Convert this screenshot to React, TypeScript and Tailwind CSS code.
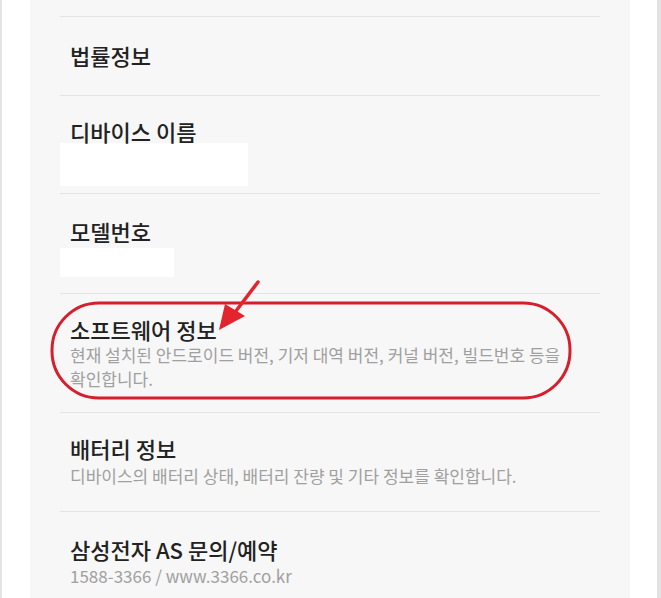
const font = { fontFamily: '"Noto Sans CJK KR", "Noto Sans", sans-serif' };

type Row = {
  title: string;
  sub?: string[];
  redact?: { w: string; h: string; mt: string };
  pad: string;
  subMt?: string;
};

const rows: Row[] = [
  { title: "법률정보", pad: "pt-[25px] pb-[27px]" },
  {
    title: "디바이스 이름",
    redact: { w: "w-[188px]", h: "h-[43px]", mt: "mt-[-1px]" },
    pad: "pt-[22px] pb-[7px]",
  },
  {
    title: "모델번호",
    redact: { w: "w-[114px]", h: "h-[29px]", mt: "mt-[4px]" },
    pad: "pt-[24px] pb-[16px]",
  },
  {
    title: "소프트웨어 정보",
    sub: [
      "현재 설치된 안드로이드 버전, 기저 대역 버전, 커널 버전, 빌드번호 등을",
      "확인합니다.",
    ],
    pad: "pt-[22px] pb-[21px]",
    subMt: "mt-[1px]",
  },
  {
    title: "배터리 정보",
    sub: ["디바이스의 배터리 상태, 배터리 잔량 및 기타 정보를 확인합니다."],
    pad: "pt-[22px] pb-[23px]",
    subMt: "mt-[3px]",
  },
  {
    title: "삼성전자 AS 문의/예약",
    sub: ["1588-3366 / www.3366.co.kr"],
    pad: "pt-[24px] pb-[30px]",
    subMt: "mt-[2px]",
  },
];

export default function App() {
  return (
    <div
      className="relative w-[661px] h-[598px] overflow-hidden bg-white border-l-2 border-r-4 border-[#e3e3e3] pl-[28px] pr-[27px]"
      style={font}
    >
      <div className="w-[600px] h-full bg-[#f7f7f7] pt-[16px] px-[30px]">
        {rows.map((r) => (
          <div key={r.title} className={`border-t border-[#e4e4e4] ${r.pad}`}>
            <div className="pl-[10px] text-[22px] leading-[26px] font-medium text-[#222] whitespace-nowrap">
              {r.title}
            </div>
            {r.redact && (
              <div className={`bg-white ${r.redact.w} ${r.redact.h} ${r.redact.mt}`} />
            )}
            {r.sub && (
              <div className={`pl-[10px] text-[17px] leading-[24px] text-[#a0a0a0] whitespace-nowrap ${r.subMt}`}>
                {r.sub.map((s) => (
                  <div key={s}>{s}</div>
                ))}
              </div>
            )}
          </div>
        ))}
      </div>

      <svg
        className="absolute left-0 top-0 pointer-events-none"
        width="661"
        height="598"
        viewBox="0 0 661 598"
      >
        <rect
          x="50"
          y="303"
          width="518"
          height="95"
          rx="47"
          fill="none"
          stroke="#d61f2c"
          strokeWidth="3"
        />
        <line x1="256" y1="282" x2="234" y2="311" stroke="#e3232d" strokeWidth="3.5" strokeLinecap="round" />
        <polygon points="217,330 223,304 243,316" fill="#e3232d" />
      </svg>
    </div>
  );
}
